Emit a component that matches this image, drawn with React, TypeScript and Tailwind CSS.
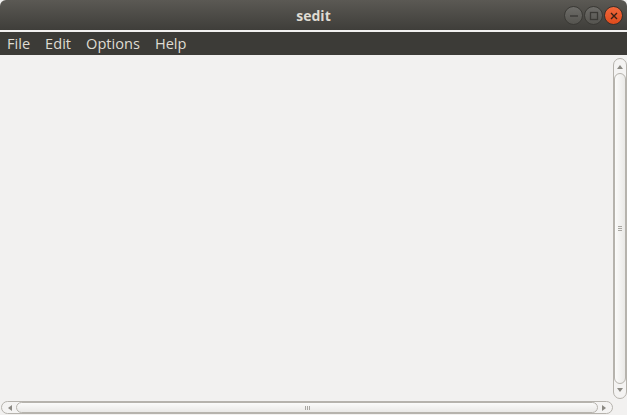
export default function App() {
  const menus = ['File', 'Edit', 'Options', 'Help'];

  return (
    <div
      className="w-[627px] h-[415px] flex flex-col overflow-hidden bg-[#f2f1f0]"
      style={{ fontFamily: '"Open Sans", "Noto Sans", sans-serif' }}
    >
      {/* title bar */}
      <div className="relative h-[30px] flex items-center justify-center rounded-t-[6px] bg-gradient-to-b from-[#5b5954] to-[#3f3e3a]">
        <span className="text-[14px] font-bold text-[#dfdbd2]">sedit</span>
        <div className="absolute right-[4px] top-[6px] flex gap-[1px]">
          <WinButton kind="min" />
          <WinButton kind="max" />
          <WinButton kind="close" />
        </div>
      </div>
      <div className="h-[2px] bg-[#f2f1f0]" />

      {/* menu bar */}
      <div className="h-[23px] flex items-center gap-[15px] px-[7px] bg-[#3c3b37]">
        {menus.map(m => (
          <span key={m} className="text-[14.6px] text-[#dfdbd2] leading-none">{m}</span>
        ))}
      </div>

      {/* text area + scrollbars */}
      <div className="flex-1 flex flex-col pt-[3px]">
        <div className="flex-1 flex">
          <div className="flex-1" />
          <VScroll />
        </div>
        <HScroll />
      </div>
    </div>
  );
}

function WinButton({ kind }: { kind: 'min' | 'max' | 'close' }) {
  const close = kind === 'close';
  return (
    <div
      className={
        'w-[19px] h-[19px] rounded-full flex items-center justify-center border ' +
        (close
          ? 'bg-gradient-to-b from-[#f2683b] to-[#df4b1b] border-[#3a2f2a]'
          : 'bg-gradient-to-b from-[#6e6d69] to-[#55544f] border-[#3a3935]')
      }
    >
      <svg width="10" height="10" viewBox="0 0 10 10">
        {kind === 'min' && <line x1="1" y1="5" x2="9" y2="5" stroke="#3a3935" strokeWidth="1.4" />}
        {kind === 'max' && <rect x="1.5" y="1.5" width="7" height="7" fill="none" stroke="#3a3935" strokeWidth="1.3" />}
        {kind === 'close' && (
          <path d="M2 2 L8 8 M8 2 L2 8" stroke="#3a2015" strokeWidth="1.4" />
        )}
      </svg>
    </div>
  );
}

function VScroll() {
  return (
    <div className="w-[14px] flex flex-col items-center rounded-full border border-[#b6b3ad] bg-[#f4f3f2] mb-[2px]">
      <svg width="8" height="10" viewBox="0 0 8 10" className="mt-[3px]">
        <path d="M1 7 L4 3 L7 7 Z" fill="#8b8983" />
      </svg>
      <div className="flex-1 w-[12px] my-[1px] rounded-full border border-[#b6b3ad] bg-gradient-to-r from-[#fbfbfa] to-[#eae9e7] flex items-center justify-center">
        <div className="flex flex-col gap-[1px]">
          <div className="w-[4px] h-[1px] bg-[#a9a7a2]" />
          <div className="w-[4px] h-[1px] bg-[#a9a7a2]" />
          <div className="w-[4px] h-[1px] bg-[#a9a7a2]" />
        </div>
      </div>
      <svg width="8" height="10" viewBox="0 0 8 10" className="mb-[3px]">
        <path d="M1 3 L4 7 L7 3 Z" fill="#8b8983" />
      </svg>
    </div>
  );
}

function HScroll() {
  return (
    <div className="h-[13px] ml-[1px] mr-[14px] mb-[1px] flex items-center rounded-full border border-[#b6b3ad] bg-[#f4f3f2]">
      <svg width="10" height="8" viewBox="0 0 10 8" className="ml-[3px]">
        <path d="M7 1 L3 4 L7 7 Z" fill="#8b8983" />
      </svg>
      <div className="flex-1 h-[11px] mx-[1px] rounded-full border border-[#b6b3ad] bg-gradient-to-b from-[#fbfbfa] to-[#eae9e7] flex items-center justify-center">
        <div className="flex gap-[1px]">
          <div className="w-[1px] h-[4px] bg-[#a9a7a2]" />
          <div className="w-[1px] h-[4px] bg-[#a9a7a2]" />
          <div className="w-[1px] h-[4px] bg-[#a9a7a2]" />
        </div>
      </div>
      <svg width="10" height="8" viewBox="0 0 10 8" className="mr-[3px]">
        <path d="M3 1 L7 4 L3 7 Z" fill="#8b8983" />
      </svg>
    </div>
  );
}
